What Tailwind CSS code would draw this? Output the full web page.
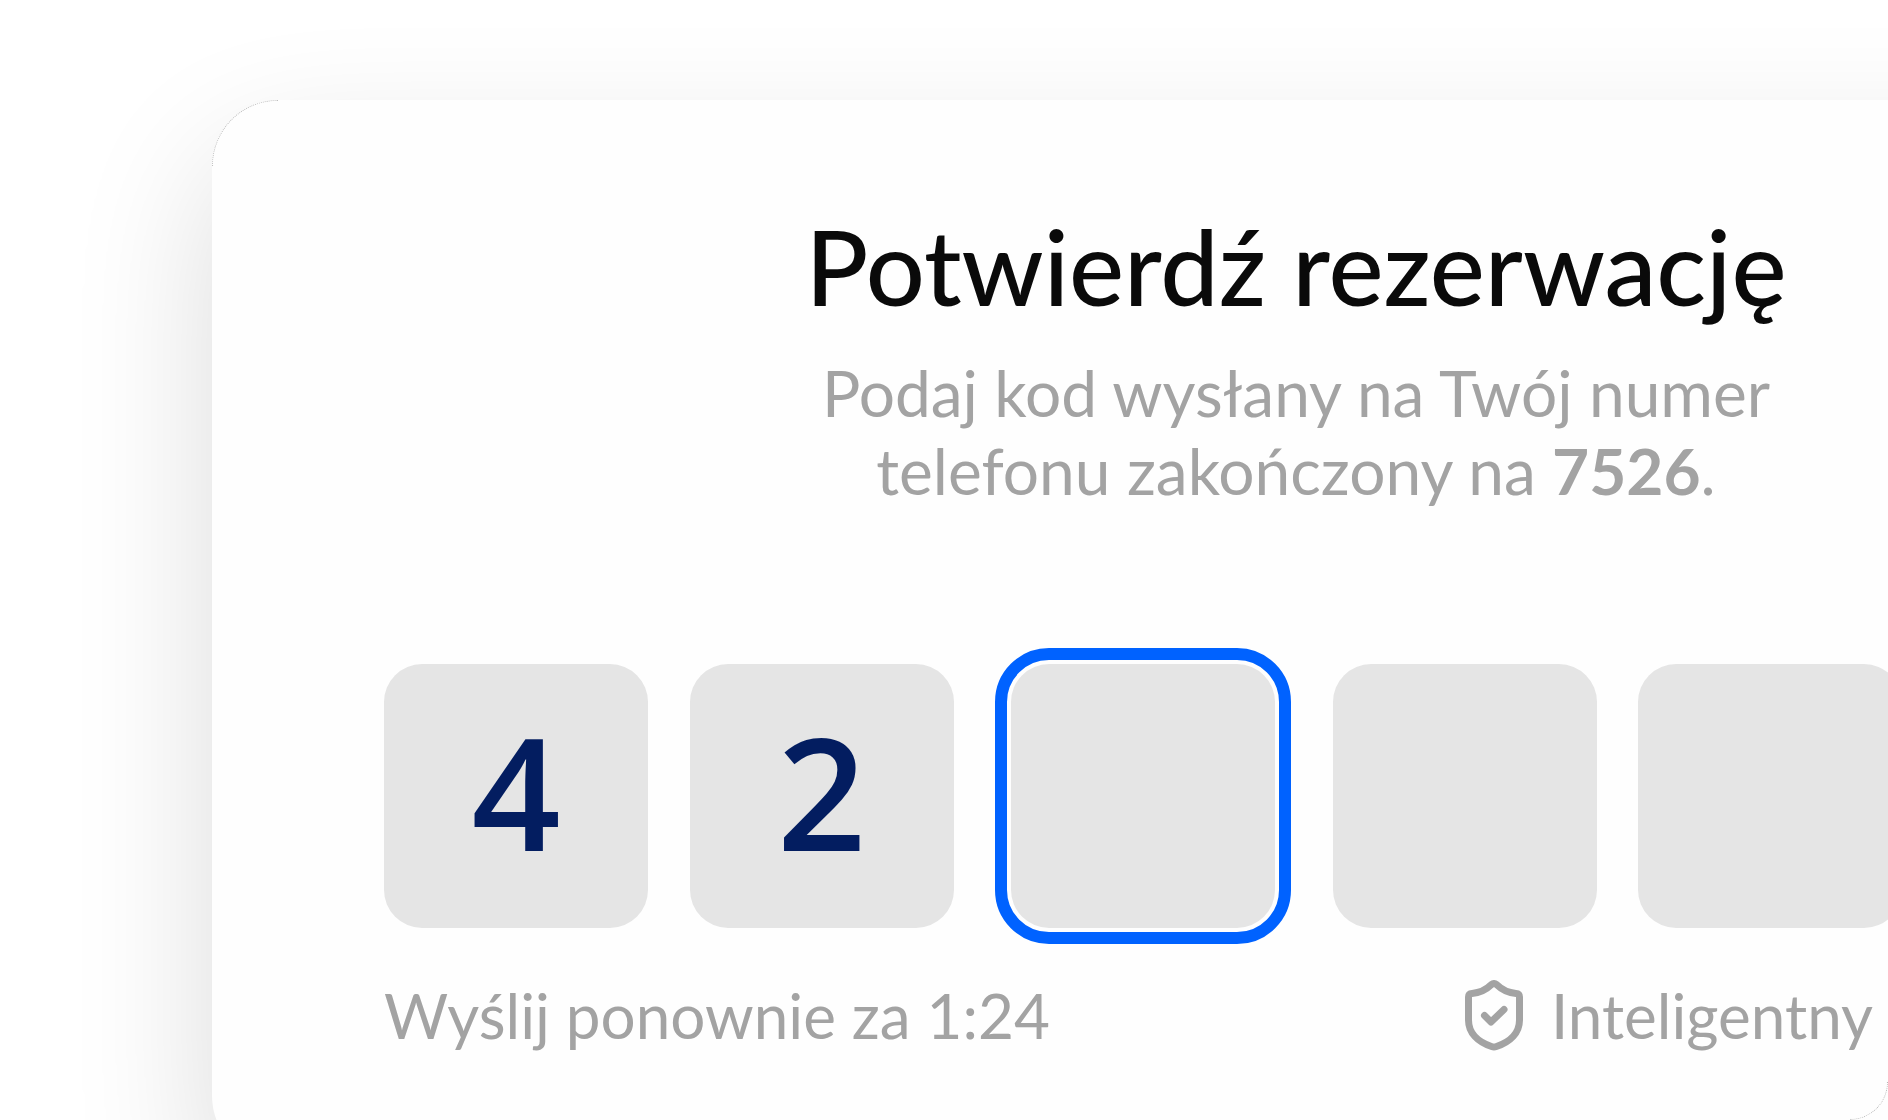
<!DOCTYPE html>
<html lang="pl">
<head>
    <meta charset="UTF-8">
    <meta name="viewport" content="width=device-width, initial-scale=1.0">
    <title>Potwierdź rezerwację</title>
    <script src="https://cdn.jsdelivr.net/npm/@tailwindcss/browser@4"></script>
</head>
<body class="bg-white font-['Lato',sans-serif] overflow-hidden">
    <main class="relative h-screen overflow-hidden">
        <!-- Confirmation card, runs past the right edge -->
        <form class="relative mt-[100px] ml-[212px] -mr-[492px] px-[172px] pt-[102px] pb-[108px] rounded-[66px] bg-[#fefefe] shadow-[0_58px_144px_rgba(0,0,0,0.14)]">
            <div class="absolute top-0 left-0 size-[66px] rounded-tl-[66px] border-t border-l border-dotted border-black/25"></div>
            <h1 class="text-center text-[104px] leading-[128px] font-medium text-[#0a0a0a]">Potwierdź rezerwację</h1>
            <p class="mt-6 text-center text-[64px] leading-[78px] text-[#a3a3a3]">
                Podaj kod wysłany na Twój numer<br>telefonu zakończony na <strong class="font-bold">7526</strong>.
            </p>

            <!-- Code inputs -->
            <div class="mt-[154px] flex justify-between font-['Open_Sans',sans-serif]">
                <input type="text" inputmode="numeric" maxlength="1" aria-label="Cyfra 1" value="4" class="size-[264px] pb-3 rounded-[38px] bg-[#e5e5e5] text-center text-[156px] font-semibold text-[#031d60]">
                <input type="text" inputmode="numeric" maxlength="1" aria-label="Cyfra 2" value="2" class="size-[264px] pb-3 rounded-[38px] bg-[#e5e5e5] text-center text-[156px] font-semibold text-[#031d60]">
                <input type="text" inputmode="numeric" maxlength="1" aria-label="Cyfra 3" class="mx-4 size-[264px] pb-3 rounded-[38px] bg-[#e5e5e5] text-center text-[156px] font-semibold text-[#031d60] outline-12 outline-offset-4 outline-[#0062ff]">
                <input type="text" inputmode="numeric" maxlength="1" aria-label="Cyfra 4" class="size-[264px] pb-3 rounded-[38px] bg-[#e5e5e5] text-center text-[156px] font-semibold text-[#031d60]">
                <input type="text" inputmode="numeric" maxlength="1" aria-label="Cyfra 5" class="size-[264px] pb-3 rounded-[38px] bg-[#e5e5e5] text-center text-[156px] font-semibold text-[#031d60]">
                <input type="text" inputmode="numeric" maxlength="1" aria-label="Cyfra 6" class="size-[264px] pb-3 rounded-[38px] bg-[#e5e5e5] text-center text-[156px] font-semibold text-[#031d60]">
            </div>

            <div class="mt-12 flex items-center justify-between text-[62px] leading-[78px] text-[#a3a3a3]">
                <p>Wyślij ponownie za 1:24</p>
                <p class="flex items-center gap-7 pr-[335px]">
                    <svg class="w-[58px] h-[71px]" viewBox="0 0 58 71" fill="none" stroke="currentColor" stroke-width="7" stroke-linecap="round" stroke-linejoin="round" aria-hidden="true">
                        <path d="M26.500 4.600Q29 2.600 31.500 4.600C37 10 43.500 13 51 13.400Q54.500 13.600 54.500 17V40C54.500 53 45 62 31.500 66.500Q29 67.300 26.500 66.500C13 62 3.500 53 3.500 40V17Q3.500 13.600 7 13.400C14.500 13 21 10 26.500 4.600Z" />
                        <path d="M19.500 35.500L26 42L39 29.500" />
                    </svg>
                    Inteligentny
                </p>
            </div>
        </form>
        <!-- Corner edge of the frame -->
        <div class="absolute right-0 bottom-0 size-[38px] rounded-br-[38px] border-r border-b border-dotted border-black/30"></div>
    </main>
</body>
</html>
